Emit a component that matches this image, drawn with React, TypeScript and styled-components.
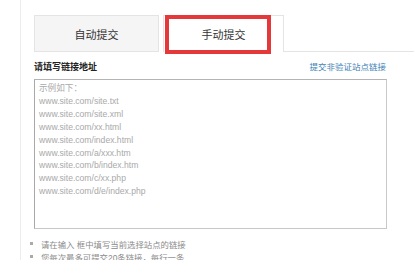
import React from "react";
import styled, { createGlobalStyle } from "styled-components";

const GlobalStyle = createGlobalStyle`
  html, body {
    margin: 0;
    padding: 0;
    background: #fff;
    font-family: "Liberation Sans", "Noto Sans CJK SC", sans-serif;
  }
`;

const Page = styled.div`
  width: 414px;
  height: 260px;
  overflow: hidden;
  display: flex;
`;

const Gutter = styled.div`
  width: 20px;
  border-right: 1px solid #ececec;
  flex-shrink: 0;
`;

const Main = styled.div`
  flex: 1;
  padding: 15px 0 0 13px;
`;

const TabBar = styled.div`
  display: flex;
  align-items: flex-end;
  height: 37px;
`;

const Tab = styled.div<{ $active?: boolean }>`
  position: relative;
  box-sizing: border-box;
  height: 37px;
  display: flex;
  align-items: center;
  justify-content: center;
  font-size: 11px;
  color: #333;
  background: ${(p) => (p.$active ? "#fff" : "#f5f5f5")};
  border: 1px solid #e4e4e4;
  border-bottom: ${(p) => (p.$active ? "none" : "1px solid #e4e4e4")};
  width: ${(p) => (p.$active ? "121px" : "125px")};
  margin-left: ${(p) => (p.$active ? "4px" : "0")};
`;

const Highlight = styled.div`
  position: absolute;
  left: 1px;
  top: -1px;
  width: 106px;
  height: 39px;
  box-sizing: border-box;
  border: 4px solid #e5383b;
`;

const TabRest = styled.div`
  flex: 1;
  border-bottom: 1px solid #e4e4e4;
`;

const HeadRow = styled.div`
  display: flex;
  justify-content: space-between;
  align-items: center;
  width: 353px;
  margin-top: 7px;
  height: 14px;
`;

const Label = styled.div`
  font-size: 9px;
  font-weight: bold;
  color: #222;
`;

const Link = styled.a`
  font-size: 8.5px;
  color: #3d7fb6;
  text-decoration: none;
  margin-right: 1px;
`;

const Box = styled.div`
  box-sizing: border-box;
  width: 353px;
  height: 150px;
  margin-top: 6px;
  border: 1px solid #c8c8c8;
  border-left-color: #a8a8a8;
  border-top-color: #b4b4b4;
  padding: 2px 4px;
  font-size: 8.6px;
  line-height: 12.9px;
  color: #a9a9a9;
`;

const Tips = styled.ul`
  list-style: none;
  margin: 8px 0 0;
  padding: 0;
`;

const Tip = styled.li`
  display: flex;
  align-items: center;
  height: 13px;
  font-size: 8.4px;
  color: #8a8a8a;

  &::before {
    content: "";
    width: 3px;
    height: 3px;
    background: #aaa;
    margin: 0 8px 0 -4px;
  }
`;

const samples = [
  "示例如下：",
  "www.site.com/site.txt",
  "www.site.com/site.xml",
  "www.site.com/xx.html",
  "www.site.com/index.html",
  "www.site.com/a/xxx.htm",
  "www.site.com/b/index.htm",
  "www.site.com/c/xx.php",
  "www.site.com/d/e/index.php",
];

export default function App() {
  return (
    <Page>
      <GlobalStyle />
      <Gutter />
      <Main>
        <TabBar>
          <Tab>自动提交</Tab>
          <Tab $active>
            <Highlight />
            手动提交
          </Tab>
          <TabRest />
        </TabBar>
        <HeadRow>
          <Label>请填写链接地址</Label>
          <Link href="#">提交非验证站点链接</Link>
        </HeadRow>
        <Box>
          {samples.map((s) => (
            <div key={s}>{s}</div>
          ))}
        </Box>
        <Tips>
          <Tip>请在输入 框中填写当前选择站点的链接</Tip>
          <Tip>您每次最多可提交20条链接，每行一条</Tip>
        </Tips>
      </Main>
    </Page>
  );
}
